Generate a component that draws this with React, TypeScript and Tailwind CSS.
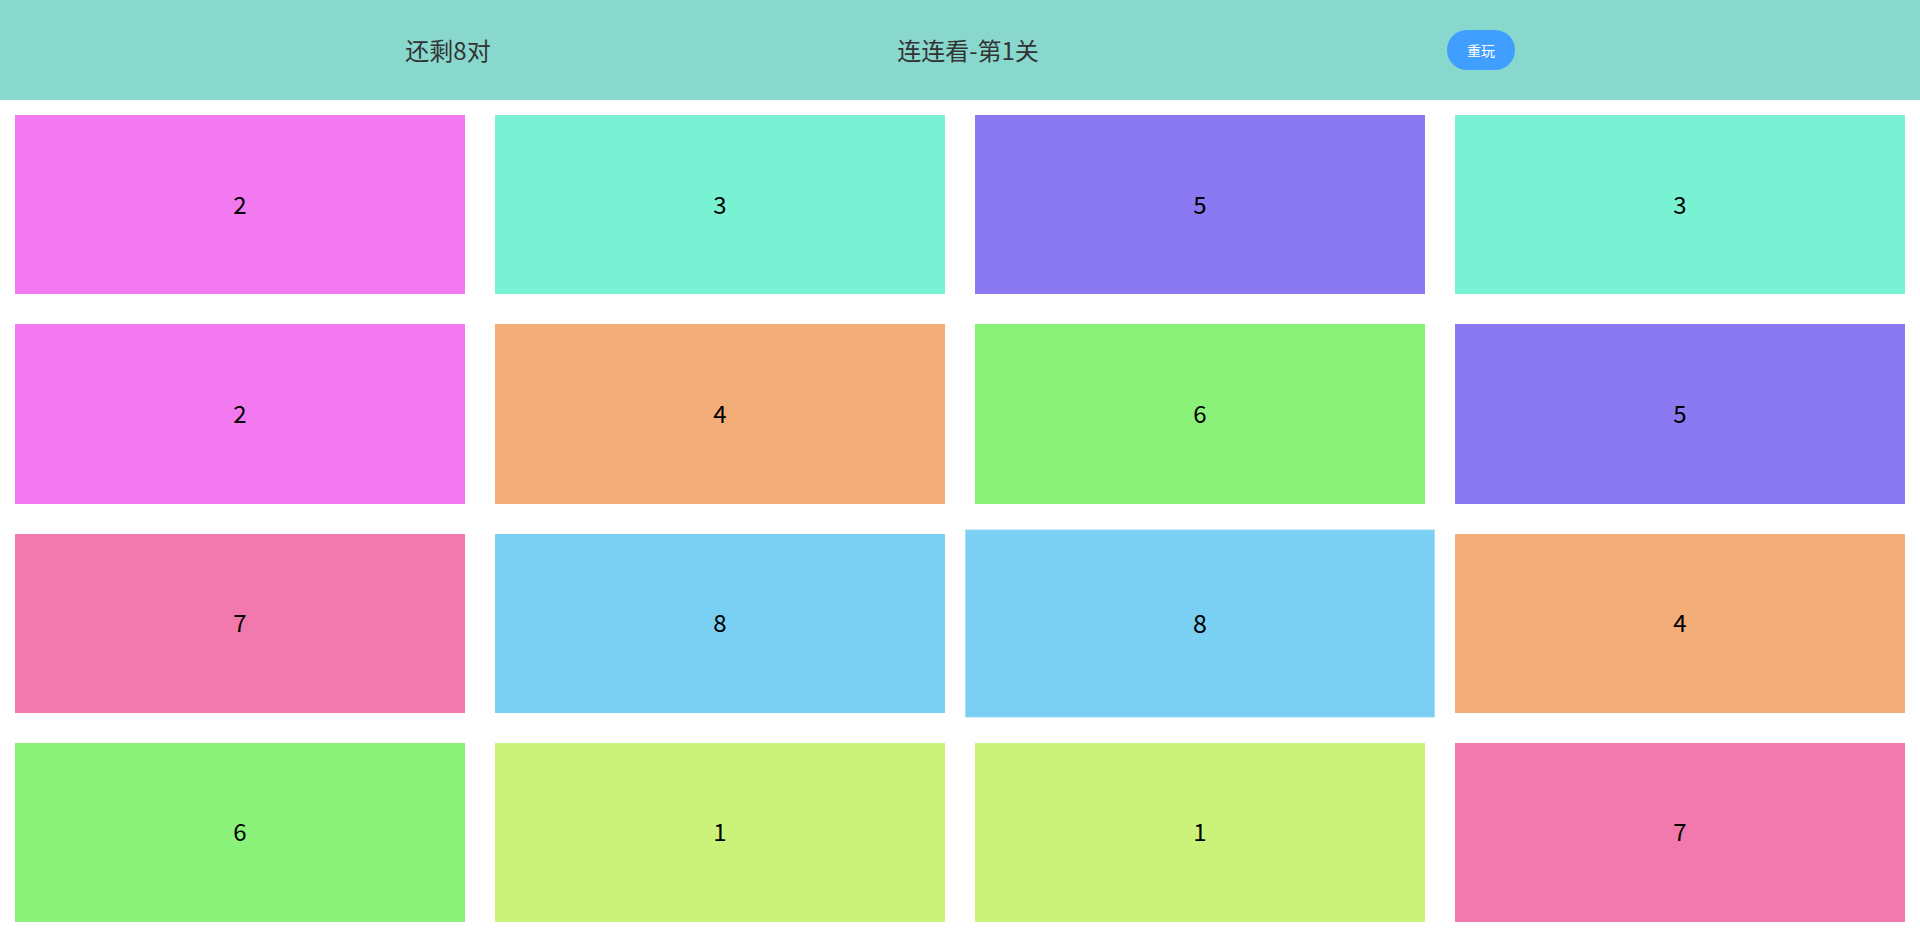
import { useState } from "react";

// tile colours by pair value
const COLORS: Record<number, string> = {
  1: "bg-[#cbf279]",
  2: "bg-[#f279ef]",
  3: "bg-[#79f2d3]",
  4: "bg-[#f2ad79]",
  5: "bg-[#8b79f2]",
  6: "bg-[#8bf279]",
  7: "bg-[#f279ad]",
  8: "bg-[#79d0f2]"
};

const BOARD = [2, 3, 5, 3, 2, 4, 6, 5, 7, 8, 8, 4, 6, 1, 1, 7];

export default function App() {
  const [selected, setSelected] = useState<number | null>(10);

  return (
    <div
      className="flex h-[937px] w-[1920px] flex-col bg-white"
      style={{ fontFamily: '"Noto Sans CJK SC", "Noto Sans", sans-serif' }}
    >
      <header className="flex h-[100px] shrink-0 items-center bg-[#88d8ce]">
        <div className="ml-[189px] grid grid-cols-[518px_522px_504px] items-center text-center">
          <span className="text-[24px] leading-none text-[#333333]">还剩8对</span>
          <span className="text-[24px] leading-none text-[#333333]">连连看-第1关</span>
          <div className="flex justify-center">
            <button className="h-[40px] w-[68px] rounded-full bg-[#409eff] text-[14px] leading-none text-white">
              重玩
            </button>
          </div>
        </div>
      </header>

      <main className="grid h-[837px] grid-cols-4 grid-rows-4">
        {BOARD.map((n, i) => (
          <div key={i} className="p-[15px]">
            <div
              onClick={() => setSelected(i === selected ? null : i)}
              className={`flex h-full w-full cursor-pointer items-center justify-center pb-[2px] text-[24px] text-black ${COLORS[n]} ${
                i === selected ? "scale-[1.04] ring-1 ring-[#a6def6]" : ""
              }`}
            >
              {n}
            </div>
          </div>
        ))}
      </main>
    </div>
  );
}
